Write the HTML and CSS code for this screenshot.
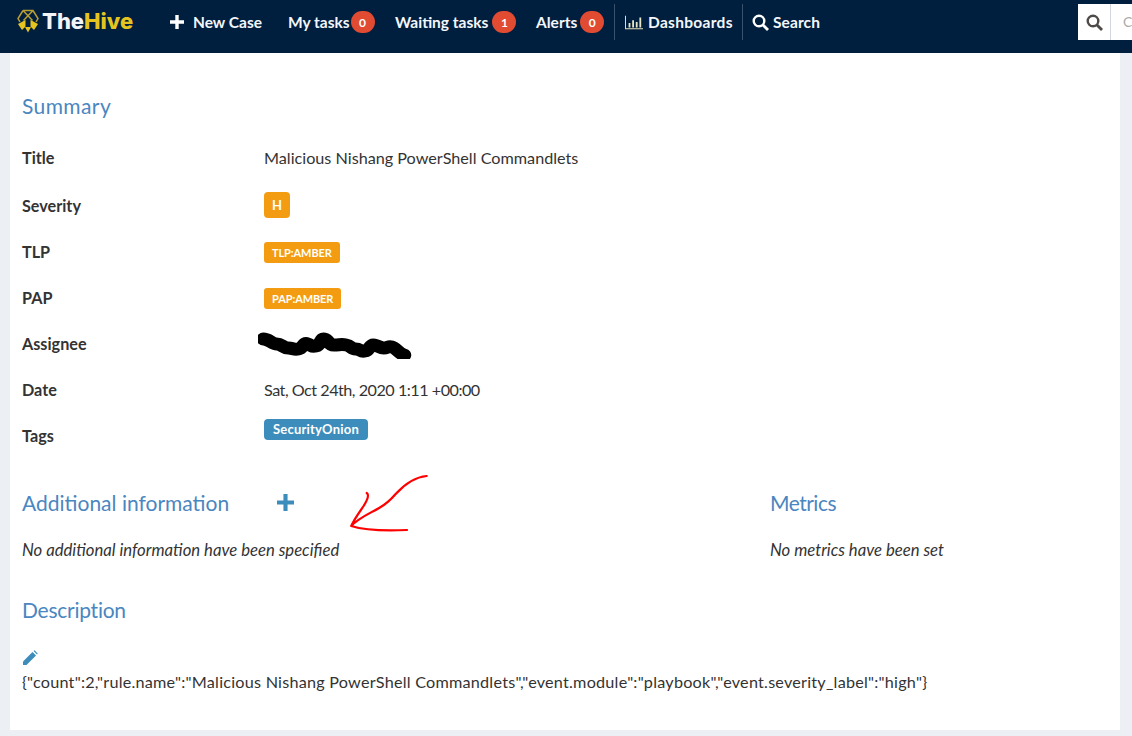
FILE: index.html
```html
<!DOCTYPE html>
<html lang="en">
<head>
<meta charset="utf-8">
<title>TheHive</title>
<link rel="stylesheet" href="styles.css">
</head>
<body>
<header class="navbar">
  <div class="brand">
    <svg class="brand-icon" width="22" height="24" viewBox="0 0 22 24">
      <path d="M6 1.5h10l5 8-2 3.5M6 1.5l-5 8 2 3.5M6.5 2l9 9.5M15.5 2l-9 9.5" fill="none" stroke="#b89f33" stroke-width="1.5"/>
      <path d="M1 15l7.500-4v6.500L5 21zM21 15l-7.500-4v6.500L17 21z" fill="#e6c420"/>
      <path d="M8 18h6l-3 5.500z" fill="#e6c420"/>
    </svg>
    <span class="brand-the">The</span><span class="brand-hive">Hive</span>
  </div>
  <nav class="nav-items">
    <a class="nav-item nav-new">
      <svg class="icon-plus" width="14" height="14" viewBox="0 0 14 14"><path d="M5.300 0h3.400v5.300H14v3.400H8.700V14H5.300V8.700H0V5.300h5.300z" fill="#fff"/></svg>
      New Case
    </a>
    <a class="nav-item nav-tasks">My tasks <span class="count">0</span></a>
    <a class="nav-item nav-waiting">Waiting tasks <span class="count">1</span></a>
    <a class="nav-item nav-alerts">Alerts <span class="count">0</span></a>
    <span class="divider"></span>
    <a class="nav-item nav-dash">
      <svg width="18" height="15" viewBox="0 0 20 15"><path d="M.5 0v14.500H20" fill="none" stroke="#e8dfb8" stroke-width="1.200"/><path d="M4 8h2v5H4zM8 5h2v8H8zM12 7h2v6h-2zM16 2h2v11h-2z" fill="#e8e4c8"/></svg>
      Dashboards
    </a>
    <span class="divider"></span>
    <a class="nav-item nav-search">
      <svg width="17" height="17" viewBox="0 0 17 17"><circle cx="7" cy="7" r="5.300" fill="none" stroke="#fff" stroke-width="2.400"/><path d="M11 11l5 5" stroke="#fff" stroke-width="2.800"/></svg>
      Search
    </a>
  </nav>
  <form class="case-search">
    <span class="case-search-btn">
      <svg width="17" height="17" viewBox="0 0 17 17"><circle cx="7" cy="7" r="5.300" fill="none" stroke="#4d4a47" stroke-width="2.400"/><path d="M11 11l5 5" stroke="#4d4a47" stroke-width="2.800"/></svg>
    </span>
    <span class="case-search-input">C</span>
  </form>
</header>

<main class="panel">
  <h3 class="section-title summary-title">Summary</h3>
  <dl class="details">
    <div class="row row-title"><dt>Title</dt><dd>Malicious Nishang PowerShell Commandlets</dd></div>
    <div class="row row-severity"><dt>Severity</dt><dd><span class="badge badge-sev">H</span></dd></div>
    <div class="row row-tlp"><dt>TLP</dt><dd><span class="badge">TLP:AMBER</span></dd></div>
    <div class="row row-pap"><dt>PAP</dt><dd><span class="badge">PAP:AMBER</span></dd></div>
    <div class="row row-assignee"><dt>Assignee</dt><dd>
      <svg class="redact" width="160" height="30" viewBox="0 0 154 30" preserveAspectRatio="none"><path d="M5 10c6 0 8 5 13 5s6 4 11 4 5 2 10 1 4-7 9-5 3 3 8 2 3-8 8-7 3 6 9 6 7-1 12 0 4 4 9 4 4 3 9 2 4-7 9-6 5 3 9 3 4-2 8-1 7 7 12 8" fill="none" stroke="#000" stroke-width="13" stroke-linecap="round" stroke-linejoin="round"/></svg>
    </dd></div>
    <div class="row row-date"><dt>Date</dt><dd class="date-value">Sat, Oct 24th, 2020 1:11 +00:00</dd></div>
    <div class="row row-tags"><dt>Tags</dt><dd><span class="tag">SecurityOnion</span></dd></div>
  </dl>

  <div class="columns">
    <section class="col-info">
      <h3 class="section-title">Additional information
        <svg class="add-icon" width="17" height="17" viewBox="0 0 14 14"><path d="M5.300 0h3.400v5.300H14v3.400H8.700V14H5.300V8.700H0V5.300h5.300z" fill="#3c8dbc"/></svg>
      </h3>
      <p class="empty">No additional information have been specified</p>
    </section>
    <section class="col-metrics">
      <h3 class="section-title metrics-title">Metrics</h3>
      <p class="empty">No metrics have been set</p>
    </section>
  </div>

  <h3 class="section-title desc-title">Description</h3>
  <svg class="edit-icon" width="16" height="16" viewBox="0 0 16 16"><path d="M1 11.500L10.500 2l3.500 3.500L4.500 15H1z" fill="#3c8dbc"/><path d="M11.500 1l1-.7 3.200 3.200-.7 1z" fill="#3c8dbc"/></svg>
  <p class="desc-text">{"count":2,"rule.name":"Malicious Nishang PowerShell Commandlets","event.module":"playbook","event.severity_label":"high"}</p>

  <svg class="arrow" width="93" height="66" viewBox="0 0 90 66" preserveAspectRatio="none"><path d="M80 2c-12 1-22 9-30 18-5 6-9 10-16 14-10 6-20 10-27 18M22 19c3 2 0 8-3 13-4 6-9 13-12 20 12 4 32 5 54 4" fill="none" stroke="#f00" stroke-width="2.200" stroke-linecap="round" stroke-linejoin="round"/></svg>
</main>
</body>
</html>
```
FILE: styles.css
```css
* { box-sizing: border-box; }
html, body { margin: 0; padding: 0; height: 100%; overflow: hidden; }
body {
  background: #ecf0f5;
  font-family: "Lato", "Noto Sans", sans-serif;
  font-size: 16.2px;
  color: #333;
}
.navbar {
  height: 53px;
  background: #001f3f;
  display: flex;
  align-items: flex-start;
  color: #f3f6fa;
  font-weight: 700;
  position: relative;
}
.brand {
  display: flex;
  align-items: center;
  height: 42px;
  padding-left: 17px;
  font-family: "Inter", "Lato", sans-serif;
  font-size: 22px;
  font-weight: 800;
  letter-spacing: 0;
  width: 170px;
  flex: none;
}
.brand-icon { margin-right: 3px; }
.brand-the { color: #f2f4f6; }
.brand-hive { color: #e6c420; }
.nav-items {
  display: flex;
  align-items: center;
  height: 44px;
  flex: 1;
}
.nav-item {
  display: flex;
  align-items: center;
  gap: 3px;
  white-space: nowrap;
  font-size: 15.5px;
}
.nav-new { gap: 9px; width: 118px; }
.nav-tasks { width: 107px; gap: 1px; }
.nav-waiting { width: 141px; gap: 4px; }
.nav-alerts { width: 78px; }
.nav-dash { width: 127px; padding-left: 10px; gap: 5px; letter-spacing: 0.3px; }
.nav-search { padding-left: 9px; gap: 4px; letter-spacing: 0.1px; }
.count {
  background: #e04b32;
  color: #fff;
  font-size: 12px;
  font-weight: 700;
  border-radius: 11px;
  min-width: 24px;
  height: 22px;
  display: inline-flex;
  align-items: center;
  justify-content: center;
  padding: 0 7px;
}
.divider {
  width: 1px;
  height: 36px;
  background: #3a516b;
  flex: none;
}
.case-search {
  display: flex;
  height: 36px;
  margin-top: 4px;
  width: 54px;
  background: #fff;
  flex: none;
}
.case-search-btn {
  width: 33px;
  flex: none;
  display: flex;
  align-items: center;
  justify-content: center;
  border-right: 1px solid #d2d6de;
}
.case-search-input {
  color: #aaa;
  font-weight: 400;
  font-size: 14px;
  padding: 9px 0 0 12px;
  overflow: hidden;
}
.panel {
  position: relative;
  margin: 0 12px 0 10px;
  background: #fff;
  height: 677px;
  padding: 39px 12px 0;
}
.section-title {
  margin: 0;
  font-weight: 400;
  font-size: 21px;
  line-height: 27px;
  color: #4a86c0;
}
.summary-title { letter-spacing: 0.4px; }
.metrics-title { letter-spacing: -0.5px; }
.details { margin: 0; padding-top: 26px; }
.row {
  display: flex;
  align-items: center;
  height: 24px;
  margin-bottom: 22.2px;
}
.row-title { margin-bottom: 24px; }
.row dt { width: 242px; font-weight: 700; flex: none; }
.row dd { margin: 0; display: flex; align-items: center; height: 24px; }
.date-value { letter-spacing: -0.5px; }
.badge {
  background: #f39c12;
  color: #fff;
  font-size: 11px;
  font-weight: 700;
  border-radius: 3px;
  height: 21px;
  padding: 0 8px;
  display: inline-flex;
  align-items: center;
  position: relative;
  top: 1px;
  letter-spacing: -0.1px;
}
.badge-sev { height: 26px; padding: 0 8px; font-size: 13px; border-radius: 4px; top: 0; }
.tag {
  background: #3c8dbc;
  color: #fff;
  font-size: 13px;
  font-weight: 700;
  border-radius: 4px;
  height: 21px;
  padding: 0 9px;
  display: inline-flex;
  align-items: center;
  margin-top: -13px;
  letter-spacing: 0.2px;
}
.redact { margin: 0 0 0 -6px; }
.columns { display: flex; margin-top: 41.4px; }
.col-info { width: 748px; flex: none; }
.add-icon { margin-left: 42px; vertical-align: 0; }
.empty { margin: 24px 0 0; font-size: 16.7px; font-style: italic; line-height: 20px; }
.desc-title { margin-top: 36px; letter-spacing: -0.25px; }
.edit-icon { display: block; margin-top: 27px; }
.desc-text { margin: 5px 0 0; line-height: 22px; letter-spacing: 0.23px; }
.arrow { position: absolute; left: 334px; top: 421px; }
```
